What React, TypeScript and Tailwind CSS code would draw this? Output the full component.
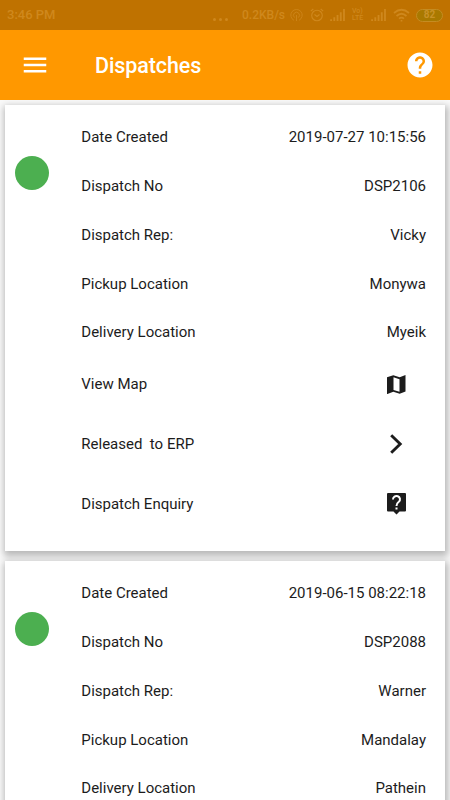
import { MdHelp, MdMenu } from 'react-icons/md'

interface Dispatch {
  created: string
  number: string
  rep: string
  pickup: string
  delivery: string
}

const dispatches: Dispatch[] = [
  {
    created: '2019-07-27 10:15:56',
    number: 'DSP2106',
    rep: 'Vicky',
    pickup: 'Monywa',
    delivery: 'Myeik',
  },
  {
    created: '2019-06-15 08:22:18',
    number: 'DSP2088',
    rep: 'Warner',
    pickup: 'Mandalay',
    delivery: 'Pathein',
  },
]

function SignalIcon() {
  return (
    <svg width="16" height="12" viewBox="0 0 17 13" fill="currentColor">
      <path d="M0 11h2v2H0zM3.500 9h2v4h-2zM7 6.500h2V13H7zM10.500 3.500h2V13h-2zM14 0h2v13h-2z" />
    </svg>
  )
}

function MapIcon() {
  return (
    <svg width="19" height="19" viewBox="0 0 19 19" fill="currentColor" fillRule="evenodd">
      <path d="M0 2.300 6.300.2l6.400 2L18.500.1V16.500l-5.800 2.300-6.400-2.100L.4 18.900H0zM6.500 2.300v12.600l6 1.900V4.200z" />
    </svg>
  )
}

function ChevronIcon() {
  return (
    <svg width="13" height="20" viewBox="0 0 13 20" fill="none" stroke="currentColor" strokeWidth="2.900">
      <path d="M1.200 1.200 10.200 10l-9 8.800" />
    </svg>
  )
}

function EnquiryIcon() {
  return (
    <svg width="19" height="22" viewBox="0 0 19 22" fill="none">
      <path d="M1 0h17q1 0 1 1v16.500q0 1-1 1h-5.500L9.500 21.500l-3-3H1q-1 0-1-1V1q0-1 1-1z" fill="currentColor" />
      <path d="M6 6.500a3.500 3.300 0 1 1 5.800 2.300Q9.500 10.500 9.500 13" stroke="#fff" strokeWidth="2" />
      <path d="M8.500 14.500h2v2h-2z" fill="#fff" />
    </svg>
  )
}

function StatusBar() {
  return (
    <div className="flex h-[30px] items-center bg-[#bf7200] pl-[7px] pr-[7px] text-[#cf881d]">
      <span className="w-[50px] whitespace-nowrap text-[13px] font-medium leading-4">3:46 PM</span>
      <div className="ml-[156px] mt-2 flex gap-[3px]">
        <span className="size-[3px] rounded-full bg-current" />
        <span className="size-[3px] rounded-full bg-current" />
        <span className="size-[3px] rounded-full bg-current" />
      </div>
      <span className="ml-[14px] w-[45px] whitespace-nowrap text-[12px] font-medium leading-4">0.2KB/s</span>
      <svg className="ml-[3px] shrink-0" width="13" height="14" viewBox="0 0 13 14" fill="none" stroke="currentColor" strokeWidth=".8">
        <path d="M4 12.300A5.700 5.700 0 1 1 9 12.300M4.500 9.500a3 3 0 1 1 4 0M6.500 7v6" />
      </svg>
      <svg className="ml-[7px] shrink-0" width="14" height="14" viewBox="0 0 14 14" fill="none" stroke="currentColor" strokeWidth="1.100">
        <circle cx="7" cy="7.500" r="5.300" />
        <path d="M.8 3.200 3.300 1M13.200 3.200 10.700 1M4.500 6.500 7 8.500l2.500-2" />
      </svg>
      <div className="ml-[6px] flex items-center">
        <SignalIcon />
        <div className="ml-[6px] w-[13px] text-[7px] font-medium">
          <div className="leading-[7px]">Vo)</div>
          <div className="leading-[7px]">LTE</div>
        </div>
        <div className="ml-[6px]">
          <SignalIcon />
        </div>
      </div>
      <svg className="ml-[6px] shrink-0" width="17" height="14" viewBox="0 0 17 14" fill="none" stroke="currentColor" strokeWidth="1.700">
        <path d="M1 5Q8.500-1.500 16 5M3.500 8Q8.500 3.500 13.500 8M6 10.700q2.500-2 5 0" />
        <path d="M8.500 12v1.500" />
      </svg>
      <div className="ml-auto flex h-[13px] w-[27px] items-center justify-center rounded-full border border-[#c58c22] bg-[#a97900] text-[10px] font-bold leading-none text-[#c99228]">
        82
      </div>
    </div>
  )
}

function Row({ label, value }: { label: string; value: string }) {
  return (
    <div className="flex h-5 items-center justify-between">
      <span>{label}</span>
      <span>{value}</span>
    </div>
  )
}

function DispatchCard({ dispatch }: { dispatch: Dispatch }) {
  return (
    <article className="flex h-[446px] shrink-0 bg-white pl-[10px] pr-[19px] pt-[22.500px] shadow-[1px_3px_7px_2px_rgba(0,0,0,0.27)]">
      <div className="mt-[28.500px] size-[34px] shrink-0 rounded-full bg-[#4caf50]" />
      <div className="ml-[32.300px] flex-1">
        <div className="flex flex-col gap-[28.75px]">
          <Row label="Date Created" value={dispatch.created} />
          <Row label="Dispatch No" value={dispatch.number} />
          <Row label="Dispatch Rep:" value={dispatch.rep} />
          <Row label="Pickup Location" value={dispatch.pickup} />
          <Row label="Delivery Location" value={dispatch.delivery} />
        </div>
        <div className="mt-[11.500px]">
          <div className="flex h-[60px] items-center justify-between">
            <span>View Map</span>
            <span className="flex w-[60px] justify-center">
              <MapIcon />
            </span>
          </div>
          <div className="flex h-[60px] items-center justify-between">
            <span className="whitespace-pre">{'Released  to ERP'}</span>
            <span className="flex w-[60px] justify-center">
              <ChevronIcon />
            </span>
          </div>
          <div className="flex h-[60px] items-center justify-between">
            <span>Dispatch Enquiry</span>
            <span className="flex w-[60px] justify-center">
              <EnquiryIcon />
            </span>
          </div>
        </div>
      </div>
    </article>
  )
}

export default function App() {
  return (
    <div className="flex h-[800px] w-[450px] flex-col overflow-hidden bg-[#fafafa] font-['Roboto',sans-serif]">
      <StatusBar />
      <header className="z-10 flex h-[70px] shrink-0 items-center bg-[#ff9800] pl-5 pr-[15px] text-white">
        <MdMenu size={30} />
        <h1 className="ml-[45px] flex-1 pt-px text-[21.500px] font-medium leading-7 tracking-[-0.1px]">Dispatches</h1>
        <MdHelp size={30} />
      </header>
      <main className="flex min-h-0 flex-1 flex-col gap-[10px] overflow-hidden px-[5px] pt-[5px] text-[15px] text-[#1c1c1c]">
        {dispatches.map((dispatch) => (
          <DispatchCard key={dispatch.number} dispatch={dispatch} />
        ))}
      </main>
    </div>
  )
}
